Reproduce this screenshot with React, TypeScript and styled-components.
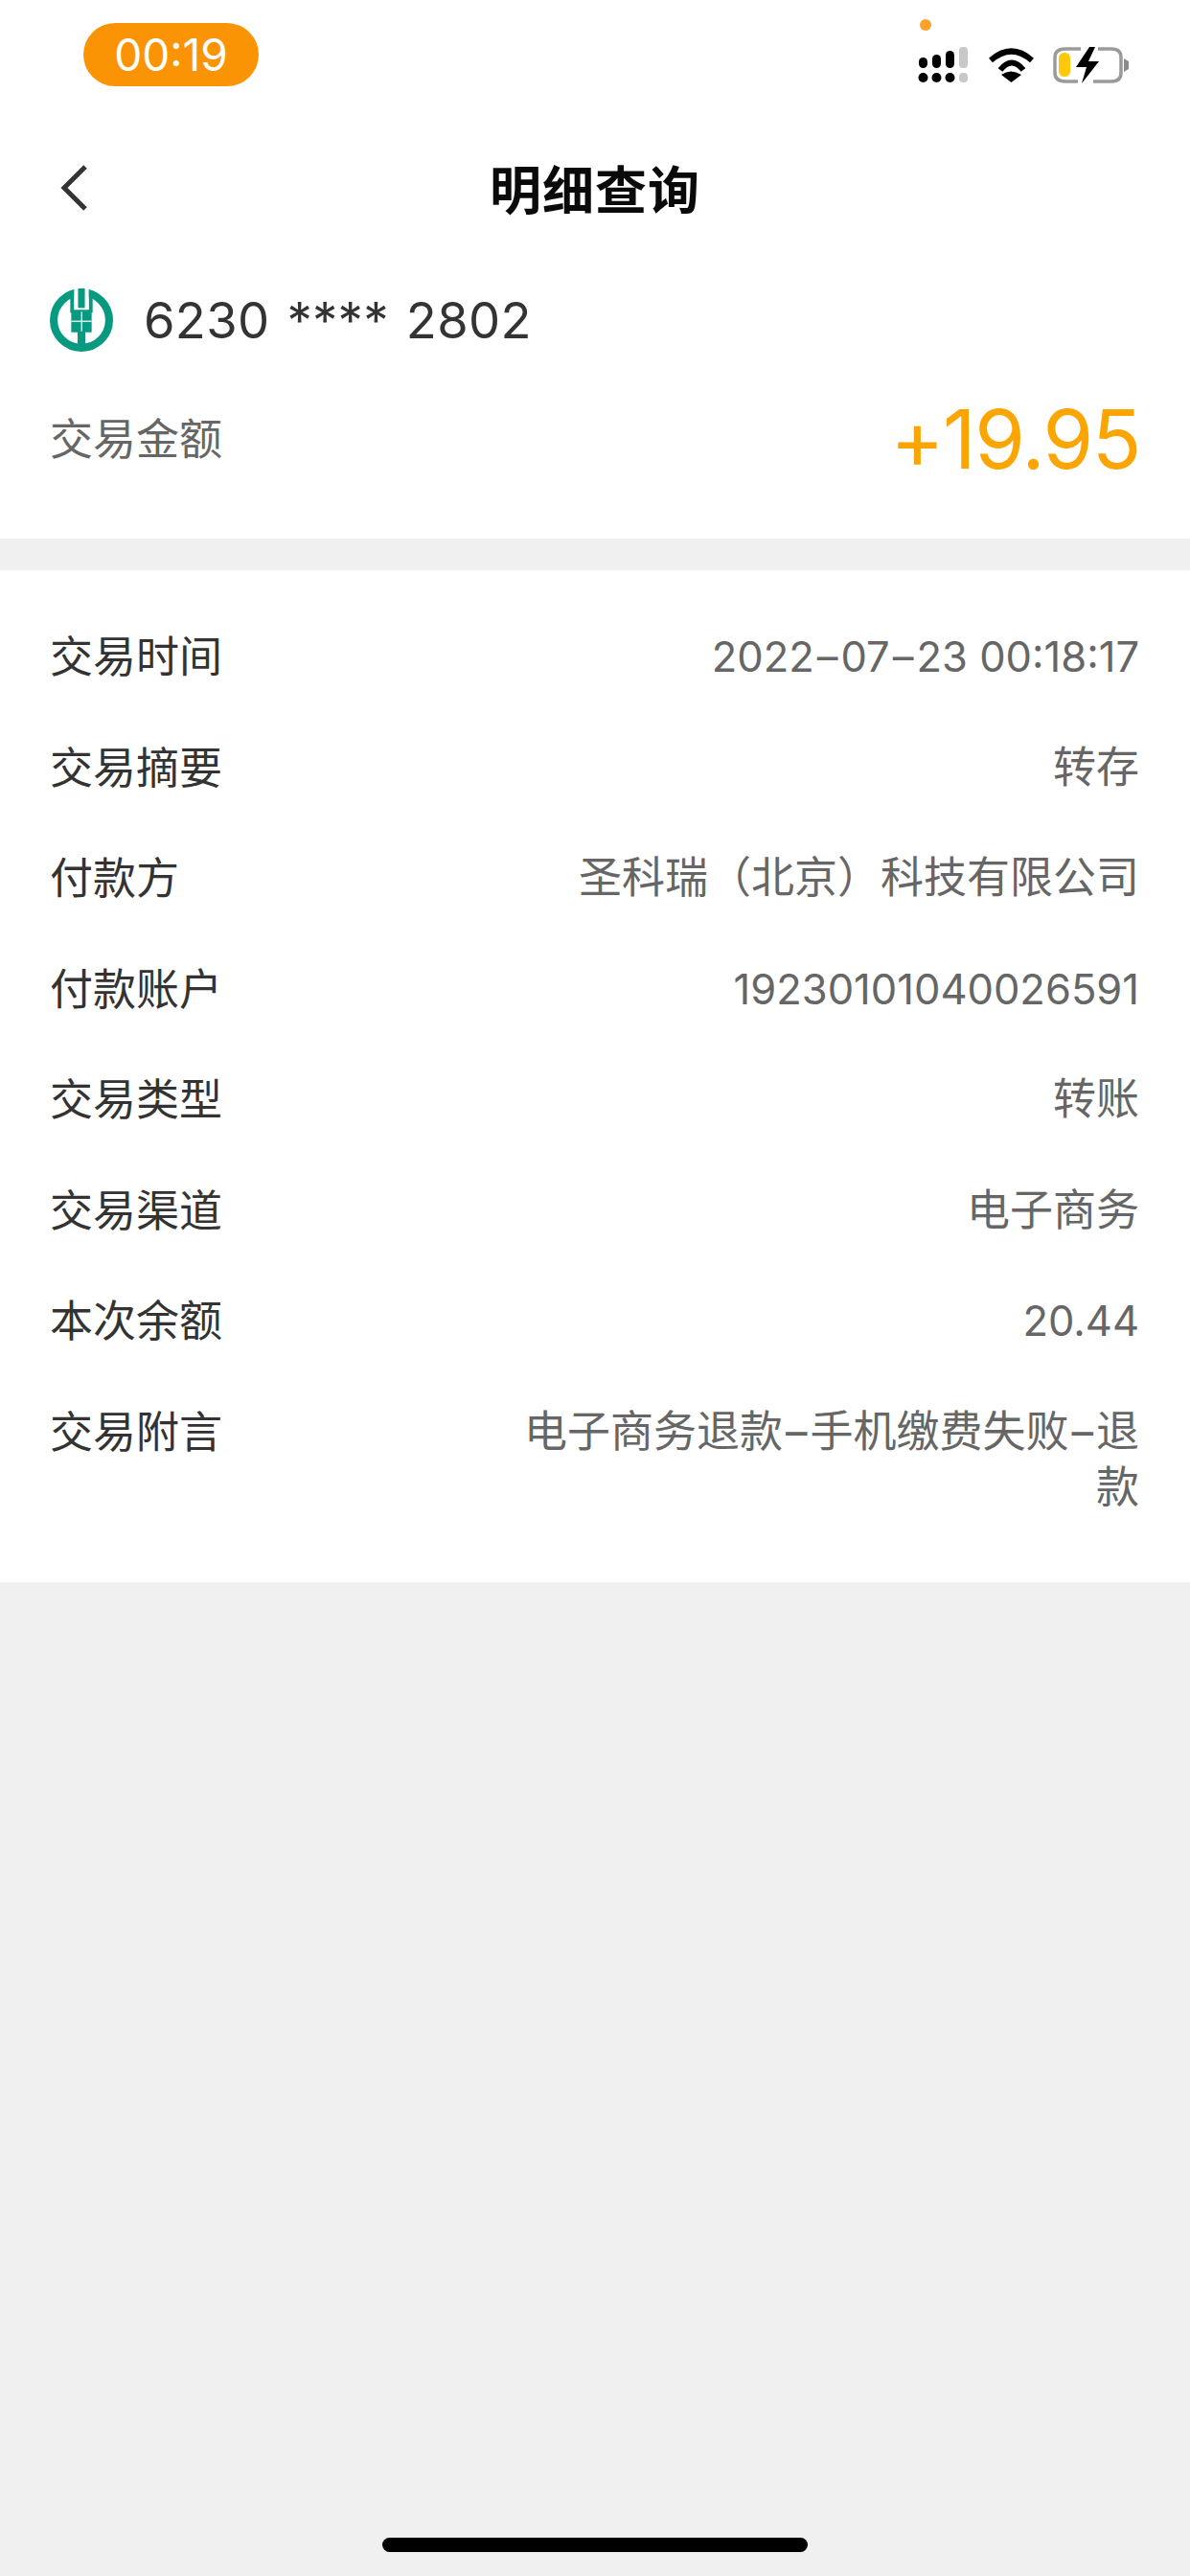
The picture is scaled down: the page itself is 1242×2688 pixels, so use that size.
import React from "react";
import styled, { createGlobalStyle } from "styled-components";

const Global = createGlobalStyle`
  html, body { margin: 0; padding: 0; background: #f0f0f0; }
  * { box-sizing: border-box; }
`;

const FONT = `Inter, "Liberation Sans", "Noto Sans CJK SC", sans-serif`;
const CJK = `"Noto Sans CJK SC", sans-serif`;

const Page = styled.div`
  position: relative;
  width: 1242px;
  height: 2688px;
  background: #f0f0f0;
  font-family: ${FONT};
  overflow: hidden;
`;
const TopPanel = styled.header`
  background: #fff;
  height: 562px;
  display: flex;
  flex-direction: column;
`;
const StatusBar = styled.div`
  height: 136px;
  display: flex;
  justify-content: space-between;
  padding: 24px 54px 0 87px;
`;
const TimePill = styled.div`
  width: 183px;
  height: 66px;
  border-radius: 33px;
  background: #fb9404;
  color: #fff;
  font-size: 46px;
  line-height: 66px;
  text-align: center;
`;
const StatusCluster = styled.svg`
  display: block;
  margin-top: -24px;
`;
const NavBar = styled.div`
  height: 120px;
  display: grid;
  grid-template-columns: 1fr auto 1fr;
  align-items: center;
  padding: 0 53px;
`;
const BackIcon = styled.svg`
  display: block;
  margin-left: 9px;
`;
const Title = styled.h1`
  margin: 0;
  font-size: 54px;
  line-height: 60px;
  font-weight: 700;
  letter-spacing: 1px;
  color: #0a0a0a;
  font-family: ${CJK};
`;
const CardRow = styled.div`
  display: flex;
  align-items: center;
  gap: 32px;
  padding: 0 52px;
  height: 80px;
  margin-top: 38px;
`;
const CardNumber = styled.span`
  font-size: 52.5px;
  color: #333;
  letter-spacing: 0.3px;
  word-spacing: 3px;
`;
const AmountRow = styled.div`
  display: flex;
  justify-content: space-between;
  align-items: center;
  padding: 0 52px;
  margin-top: 35px;
`;
const AmountLabel = styled.span`
  font-size: 45px;
  color: #666;
  font-family: ${CJK};
  margin-top: -8px;
`;
const Amount = styled.span`
  font-size: 85px;
  line-height: 100px;
  color: #fca500;
  font-weight: 400;
  letter-spacing: -1.5px;
`;
const Details = styled.section`
  margin-top: 33px;
  background: #fff;
  height: 1056px;
  padding: 30px 53px 0 52px;
  display: flex;
  flex-direction: column;
`;
const Row = styled.div`
  display: flex;
  justify-content: space-between;
  gap: 60px;
  min-height: 115.5px;
  padding-top: 29px;
`;
const Label = styled.span`
  flex: none;
  font-size: 45px;
  line-height: 58px;
  color: #333;
  font-family: ${CJK};
`;
const Value = styled.span<{ $numeric?: boolean }>`
  width: 650px;
  flex: none;
  text-align: right;
  font-size: ${(p) => (p.$numeric ? "43.5px" : "45px")};
  line-height: 58px;
  color: #666;
  padding-top: 2px;
  word-break: break-all;
  font-family: ${FONT};
`;
const Dash = styled.span`
  margin: 0 3px;
`;
const HomeIndicator = styled.div`
  position: absolute;
  left: 399px;
  bottom: 25px;
  width: 444px;
  height: 15px;
  border-radius: 8px;
  background: #000;
`;

const rows: { k: string; v: string; numeric?: boolean }[] = [
  { k: "交易时间", v: "2022–07–23 00:18:17", numeric: true },
  { k: "交易摘要", v: "转存" },
  { k: "付款方", v: "圣科瑞（北京）科技有限公司" },
  { k: "付款账户", v: "19230101040026591", numeric: true },
  { k: "交易类型", v: "转账" },
  { k: "交易渠道", v: "电子商务" },
  { k: "本次余额", v: "20.44", numeric: true },
  { k: "交易附言", v: "电子商务退款–手机缴费失败–退款" },
];

const withDashes = (text: string) =>
  text.split(/(–)/).map((part, i) => (part === "–" ? <Dash key={i}>–</Dash> : part));

const Icons = () => (
  <StatusCluster width="233" height="100" viewBox="955 0 233 100">
    <circle cx="966" cy="26" r="6" fill="#fda32b" />
    <g fill="#000">
      <rect x="959" y="60" width="9" height="11" rx="4.5" />
      <rect x="973" y="57" width="9" height="14" rx="4.5" />
      <rect x="987" y="53" width="9" height="18" rx="4.5" />
      <circle cx="963.5" cy="81" r="5" />
      <circle cx="977.5" cy="81" r="5" />
      <circle cx="991.5" cy="81" r="5" />
    </g>
    <rect x="1001" y="49" width="9" height="22" rx="4" fill="#c8c8c8" />
    <rect x="1001" y="76" width="9" height="10" rx="4" fill="#c8c8c8" />
    <g fill="none" stroke="#000" strokeWidth="6">
      <path d="M1034 63 Q1055.5 44 1077 63" />
      <path d="M1044 73 Q1056 58 1068 73" />
    </g>
    <path d="M1045 78 Q1055 71 1066 78 L1055.5 86 Z" fill="#000" />
    <path d="M1128 51 H1112 Q1101 51 1101 60 V76 Q1101 85 1112 85 H1125 M1141 85 H1160 Q1170 85 1170 76 V60 Q1170 51 1160 51 H1146" fill="none" stroke="#9a9a9a" strokeWidth="3.5" />
    <rect x="1105" y="55" width="12" height="25" rx="5.5" fill="#fdc90a" />
    <path d="M1173 61 L1178 64 V72 L1173 75 Z" fill="#8a8a8a" />
    <path d="M1137 49 L1123 70 H1134 L1129 87 L1147 64 H1136 L1143 49 Z" fill="#000" />
  </StatusCluster>
);

const BankLogo = () => (
  <svg width="66" height="66" viewBox="0 0 65 65">
    <circle cx="32.5" cy="32.5" r="28.5" fill="none" stroke="#089a80" strokeWidth="8" />
    <rect x="21" y="5" width="4" height="20" fill="#089a80" />
    <rect x="40" y="5" width="4" height="20" fill="#089a80" />
    <rect x="25" y="0" width="15" height="22" fill="#fff" />
    <rect x="29" y="0" width="7" height="20" fill="#089a80" />
    <path d="M22 22 H43 V45 H36.5 V63 H28.5 V45 H22 Z" fill="#089a80" />
    <rect x="22" y="33" width="21" height="1.5" fill="#cfeae4" />
    <rect x="32" y="24" width="1.5" height="20" fill="#cfeae4" />
  </svg>
);

export default function App() {
  return (
    <Page>
      <Global />
      <TopPanel>
        <StatusBar>
          <TimePill>00:19</TimePill>
          <Icons />
        </StatusBar>
        <NavBar>
          <BackIcon width="32" height="50" viewBox="0 0 32 50">
            <path d="M27 3 L5 25 L27 47" fill="none" stroke="#333" strokeWidth="5" />
          </BackIcon>
          <Title>明细查询</Title>
          <span />
        </NavBar>
        <CardRow>
          <BankLogo />
          <CardNumber>6230 **** 2802</CardNumber>
        </CardRow>
        <AmountRow>
          <AmountLabel>交易金额</AmountLabel>
          <Amount>+19.95</Amount>
        </AmountRow>
      </TopPanel>
      <Details>
        {rows.map((r) => (
          <Row key={r.k}>
            <Label>{r.k}</Label>
            <Value $numeric={r.numeric}>{withDashes(r.v)}</Value>
          </Row>
        ))}
      </Details>
      <HomeIndicator />
    </Page>
  );
}
